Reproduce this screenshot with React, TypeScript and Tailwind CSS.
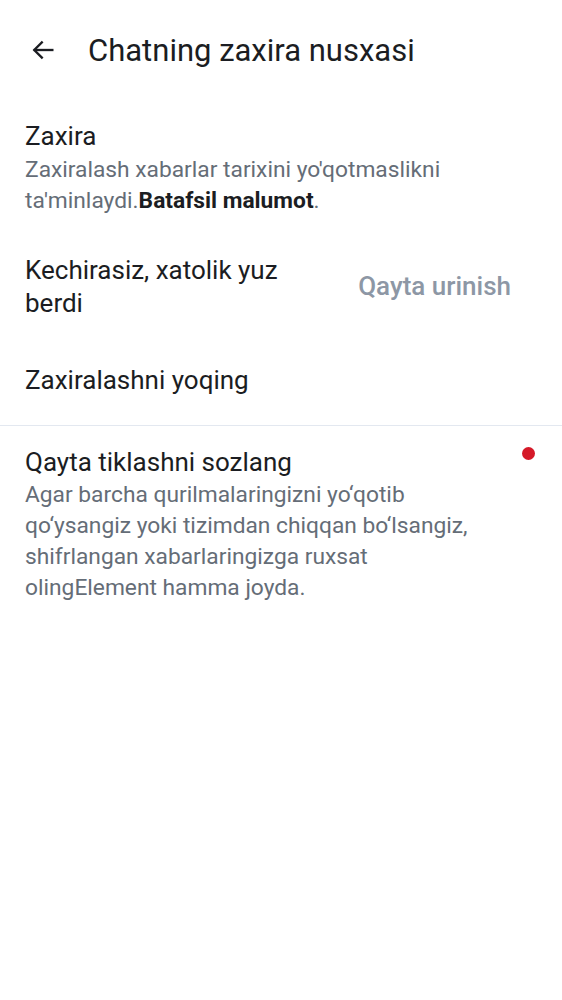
import React from 'react';

const BackArrow: React.FC = () => (
  <svg width="28" height="28" viewBox="0 0 24 24" fill="none" stroke="#1b1d22" strokeWidth="2" strokeLinecap="square">
    <path d="M20 12H5" />
    <path d="M11 5.5L4.5 12l6.5 6.5" />
  </svg>
);

const App: React.FC = () => {
  return (
    <div className="min-h-[1000px] w-[562px] bg-white text-[#1b1d22]" style={{ fontFamily: 'Roboto, sans-serif' }}>
      {/* top bar */}
      <div className="flex h-[100px] items-center pl-[29px]">
        <BackArrow />
        <h1 className="ml-[31px] text-[31px] leading-none">Chatning zaxira nusxasi</h1>
      </div>

      <div className="px-[25px] pt-[20px]">
        <p className="text-[26px] leading-[32px]">Zaxira</p>
        <p className="mt-[2px] w-[455px] text-[22.75px] leading-[31.3px] text-[#656d77]">
          Zaxiralash xabarlar tarixini yo'qotmaslikni ta'minlaydi.
          <span className="font-bold text-[#1b1d22]">Batafsil malumot</span>.
        </p>
      </div>

      <div className="mt-[37px] flex items-center justify-between pl-[25px] pr-[51px]">
        <p className="w-[290px] text-[26px] leading-[33px]">Kechirasiz, xatolik yuz berdi</p>
        <button className="text-[26px] font-medium text-[#8d97a5]">Qayta urinish</button>
      </div>

      <div className="px-[25px] pb-[29px] pt-[44px]">
        <p className="text-[26px] leading-[32px]">Zaxiralashni yoqing</p>
      </div>

      <div className="h-px bg-[#e3e8f0]" />

      <div className="relative px-[25px] pt-[20px]">
        <p className="text-[26px] leading-[32px]">Qayta tiklashni sozlang</p>
        <p className="mt-[1px] w-[455px] text-[22.75px] leading-[31.3px] text-[#656d77]">
          Agar barcha qurilmalaringizni yo‘qotib qo‘ysangiz yoki tizimdan chiqqan bo‘lsangiz, shifrlangan xabarlaringizga ruxsat olingElement hamma joyda.
        </p>
        <span className="absolute right-[27px] top-[21px] h-[13px] w-[13px] rounded-full bg-[#d51928]" />
      </div>
    </div>
  );
};

export default App;
